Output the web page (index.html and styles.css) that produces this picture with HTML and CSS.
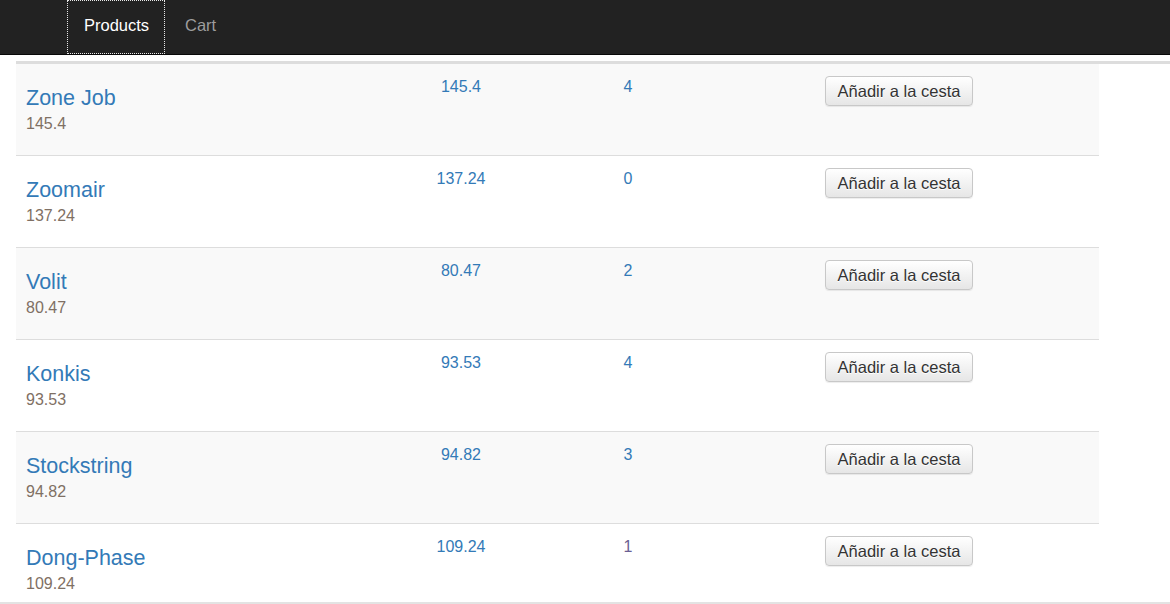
FILE: index.html
```html
<!DOCTYPE html>
<html lang="es">
<head>
<meta charset="utf-8">
<title>Products</title>
<link rel="stylesheet" href="styles.css">
</head>
<body>
<nav class="navbar">
  <ul class="nav">
    <li><a class="nav-link active" href="#">Products</a></li>
    <li><a class="nav-link" href="#">Cart</a></li>
  </ul>
</nav>
<main class="container">
  <div class="table-head"></div>
  <div class="table">
    <div class="row odd">
      <div class="cell name-cell"><a class="name" href="#">Zone Job</a><div class="sub">145.4</div></div>
      <div class="cell num">145.4</div>
      <div class="cell qty">4</div>
      <div class="cell act"><button class="btn">Añadir a la cesta</button></div>
    </div>
    <div class="row">
      <div class="cell name-cell"><a class="name" href="#">Zoomair</a><div class="sub">137.24</div></div>
      <div class="cell num">137.24</div>
      <div class="cell qty">0</div>
      <div class="cell act"><button class="btn">Añadir a la cesta</button></div>
    </div>
    <div class="row odd">
      <div class="cell name-cell"><a class="name" href="#">Volit</a><div class="sub">80.47</div></div>
      <div class="cell num">80.47</div>
      <div class="cell qty">2</div>
      <div class="cell act"><button class="btn">Añadir a la cesta</button></div>
    </div>
    <div class="row">
      <div class="cell name-cell"><a class="name" href="#">Konkis</a><div class="sub">93.53</div></div>
      <div class="cell num">93.53</div>
      <div class="cell qty">4</div>
      <div class="cell act"><button class="btn">Añadir a la cesta</button></div>
    </div>
    <div class="row odd">
      <div class="cell name-cell"><a class="name" href="#">Stockstring</a><div class="sub">94.82</div></div>
      <div class="cell num">94.82</div>
      <div class="cell qty">3</div>
      <div class="cell act"><button class="btn">Añadir a la cesta</button></div>
    </div>
    <div class="row">
      <div class="cell name-cell"><a class="name" href="#">Dong-Phase</a><div class="sub">109.24</div></div>
      <div class="cell num">109.24</div>
      <div class="cell qty visited">1</div>
      <div class="cell act"><button class="btn">Añadir a la cesta</button></div>
    </div>
  </div>
</main>
<div class="bottom-bar"></div>
</body>
</html>
```

FILE: styles.css
```css
* { box-sizing: border-box; }
html, body { margin: 0; padding: 0; }
body {
  font-family: "Liberation Sans", Arial, Helvetica, sans-serif;
  font-size: 16px;
  line-height: 20px;
  color: #333;
  background: #fff;
  overflow: hidden;
  height: 604px;
}
.navbar {
  height: 55px;
  background: #222;
  border-bottom: 1px solid #080808;
  padding-left: 67px;
}
.nav {
  list-style: none;
  margin: 0;
  padding: 0;
  display: flex;
  height: 54px;
}
.nav li { display: flex; }
.nav-link {
  display: flex;
  align-items: center;
  height: 54px;
  padding: 0 16px 4px 17px;
  color: #9d9d9d;
  text-decoration: none;
  font-size: 16.5px;
}
.nav-link.active {
  color: #fff;
  outline: 1px dotted #e8e8e8;
  outline-offset: -1px;
  width: 98px;
}
.nav li + li .nav-link { padding-left: 20px; }
.container {
  padding-left: 16px;
  padding-top: 6px;
}
.table-head {
  height: 3px;
  background: #ddd;
}
.table { width: 1083px; }
.row {
  display: grid;
  grid-template-columns: 344px 202px 132px 1fr;
  height: 92px;
  border-top: 1px solid #ddd;
  background: #fff;
}
.row:first-child { border-top: 0; height: 91px; }
.row.odd { background: #f9f9f9; }
.cell { padding: 11px 10px 0; }
.name-cell { padding-top: 22px; }
.name {
  display: block;
  font-size: 21.5px;
  line-height: 24px;
  color: #337ab7;
  text-decoration: none;
}
.sub {
  margin-top: 4px;
  color: #7f7064;
  font-size: 16px;
}
.num, .qty {
  text-align: center;
  color: #337ab7;
  padding-top: 13px;
}
.qty.visited { color: #6b5f93; }
.act { padding-left: 131px; padding-top: 12px; }
.btn {
  font-family: "Liberation Sans", Arial, Helvetica, sans-serif;
  font-size: 16.5px;
  line-height: 20px;
  height: 30px;
  padding: 4px 10px;
  width: 148px;
  color: #333;
  border: 1px solid #c8c8c8;
  border-radius: 4px;
  background: linear-gradient(to bottom, #fff 0%, #e6e6e6 100%);
  text-shadow: 0 1px 0 #fff;
  box-shadow: inset 0 1px 0 rgba(255,255,255,.15), 0 1px 1px rgba(0,0,0,.075);
  cursor: pointer;
}
.bottom-bar {
  position: fixed;
  left: 0;
  right: 0;
  bottom: 0;
  height: 2px;
  background: #e3e3e3;
}
```
